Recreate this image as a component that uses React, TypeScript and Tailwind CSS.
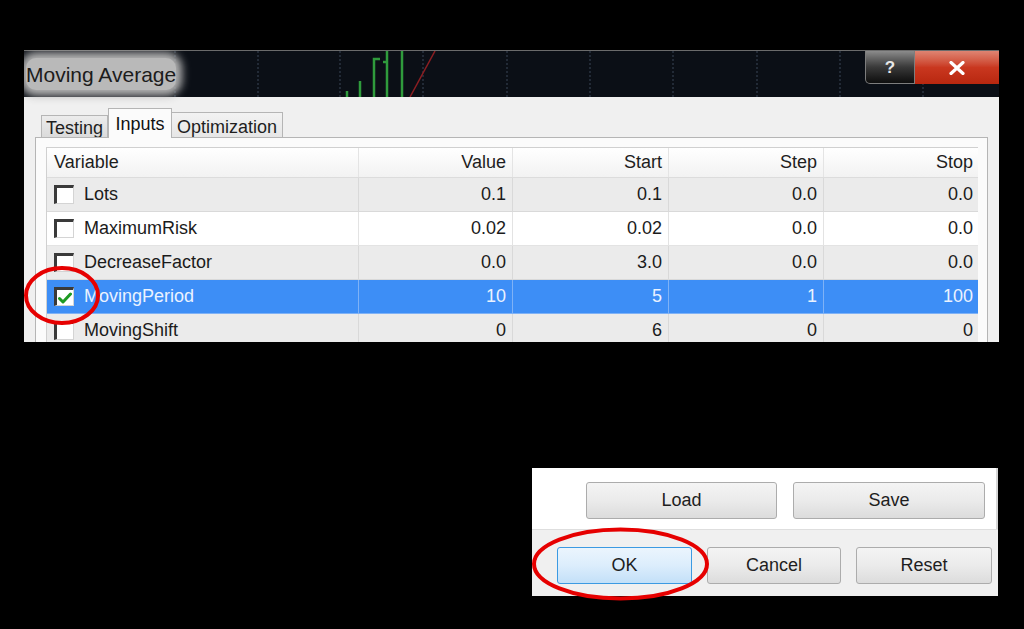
import React from 'react';

type Row = {
  name: string;
  value: string;
  start: string;
  step: string;
  stop: string;
  checked: boolean;
  rowClass: string;
  lineClass: string;
};

const rows: Row[] = [
  { name: 'Lots', value: '0.1', start: '0.1', step: '0.0', stop: '0.0', checked: false, rowClass: 'bg-[#ebebeb] text-[#1b1b1b]', lineClass: 'border-[#d9d9d9]' },
  { name: 'MaximumRisk', value: '0.02', start: '0.02', step: '0.0', stop: '0.0', checked: false, rowClass: 'bg-white text-[#1b1b1b]', lineClass: 'border-[#e3e3e3]' },
  { name: 'DecreaseFactor', value: '0.0', start: '3.0', step: '0.0', stop: '0.0', checked: false, rowClass: 'bg-[#ebebeb] text-[#1b1b1b]', lineClass: 'border-[#d9d9d9]' },
  { name: 'MovingPeriod', value: '10', start: '5', step: '1', stop: '100', checked: true, rowClass: 'bg-[#3d8ef6] text-[#eaf2ff]', lineClass: 'border-[#7fb2f6]' },
  { name: 'MovingShift', value: '0', start: '6', step: '0', stop: '0', checked: false, rowClass: 'bg-[#ebebeb] text-[#1b1b1b]', lineClass: 'border-[#d9d9d9]' },
];

const cols = 'grid grid-cols-[311px_154px_156px_155px_156px]';

function Checkbox({ checked }: { checked: boolean }) {
  return (
    <div className="w-[20px] h-[19px] shrink-0 bg-white border-t-[3px] border-l-[3px] border-r border-b border-t-[#3a3a3a] border-l-[#3a3a3a] border-r-[#d4d4d4] border-b-[#d4d4d4] flex items-center justify-center">
      {checked && (
        <svg width="14" height="12" viewBox="0 0 14 12">
          <path d="M1.5 6.5 L5 10 L12.5 2" fill="none" stroke="#1d9a22" strokeWidth="3" strokeLinecap="round" strokeLinejoin="round" />
        </svg>
      )}
    </div>
  );
}

function TitleChart() {
  const grid = [151, 234, 316, 399, 483, 566, 649, 733, 816, 899];
  return (
    <svg className="absolute inset-0" width="975" height="46" viewBox="0 0 975 46">
      {grid.map((x) => (
        <line key={x} x1={x} y1="0" x2={x} y2="46" stroke="#2b3442" strokeWidth="1.5" strokeDasharray="2 2" />
      ))}
      <g stroke="#2f9b3c" strokeWidth="2.5" fill="none">
        <line x1="323" y1="40" x2="323" y2="46" />
        <line x1="336" y1="30" x2="336" y2="46" />
        <path d="M350 46 L350 8 L356 8" />
        <line x1="363" y1="0" x2="363" y2="46" />
        <line x1="359" y1="11" x2="363" y2="11" />
        <line x1="378" y1="0" x2="378" y2="46" />
      </g>
      <line x1="386" y1="46" x2="411" y2="0" stroke="#8b1e22" strokeWidth="1.5" />
    </svg>
  );
}

function WinButton({ label, primary }: { label: string; primary?: boolean }) {
  return (
    <button
      className={
        primary
          ? 'h-[37px] w-full rounded-[3px] border border-[#3c9ae2] bg-linear-to-b from-[#ebf5fd] via-[#dcedfc] to-[#c3e0f8] text-[18px] text-[#1e1e1e]'
          : 'h-[37px] w-full rounded-[3px] border border-[#acacac] bg-linear-to-b from-[#f4f4f4] via-[#ebebeb] to-[#dcdcdc] text-[18px] text-[#1e1e1e]'
      }
    >
      {label}
    </button>
  );
}

export default function App() {
  return (
    <div className="relative w-[1024px] h-[629px] overflow-hidden bg-black pt-[50px] pl-[24px] font-['Liberation_Sans',Arial,sans-serif]">
      {/* dialog fragment */}
      <div className="w-[975px] h-[292px] flex flex-col overflow-hidden">
        {/* title bar */}
        <div className="relative h-[47px] shrink-0 bg-[#0b0f16] border-t border-[#6b6b6b] flex items-start justify-between">
          <TitleChart />
          <div className="relative mt-[7px] ml-[2px] h-[32px] flex items-center rounded-[10px] bg-[#b9b9b9] shadow-[0_0_9px_6px_#b4b4b4]">
            <span className="text-[21px] text-[#1c1c1c] leading-none">Moving Average</span>
          </div>
          <div className="relative flex">
            <div className="w-[50px] h-[33px] rounded-bl-[5px] border border-t-0 border-[#7d7d7d] bg-linear-to-b from-[#8c8c8c] via-[#3a3a3a] to-[#0e0e0e] flex items-center justify-center">
              <span className="text-[17px] font-bold text-[#e8e8e8] leading-none">?</span>
            </div>
            <div className="w-[84px] h-[33px] bg-linear-to-b from-[#de8472] via-[#c9371f] to-[#b8270f] flex items-center justify-center">
              <svg width="16" height="14" viewBox="0 0 16 14">
                <path d="M2 1.5 L14 12.5 M14 1.5 L2 12.5" stroke="#ffffff" strokeWidth="3.2" strokeLinecap="round" />
              </svg>
            </div>
          </div>
        </div>

        {/* client area */}
        <div className="flex-1 flex flex-col bg-[#f0f0f0] pt-[11px] pl-[11px] pr-[11px]">
          <div className="flex items-end h-[30px] pl-[6px] shrink-0">
            <div className="w-[67px] h-[23px] border border-b-0 border-[#b5b5b5] bg-linear-to-b from-[#ececec] to-[#dadada] flex justify-center pt-[3px] text-[18px] leading-[18px] text-[#1e1e1e]">
              Testing
            </div>
            <div className="relative z-10 w-[64px] h-[30px] border border-b-0 border-[#b5b5b5] bg-[#fbfbfb] flex justify-center pt-[6px] text-[18px] leading-[18px] text-[#111]">
              Inputs
            </div>
            <div className="w-[111px] h-[26px] border border-b-0 border-l-0 border-[#b5b5b5] bg-linear-to-b from-[#f2f2f2] to-[#e6e6e6] flex justify-center pt-[5px] text-[18px] leading-[18px] text-[#1e1e1e]">
              Optimization
            </div>
          </div>

          <div className="flex-1 -mt-px border border-[#b5b5b5] bg-[#fbfbfb] pt-[9px] pl-[10px] pr-[9px]">
            <div className="border-l border-t border-[#d0d0d0] text-[18px]">
              <div className={`${cols} h-[30px] bg-linear-to-b from-white to-[#f2f2f2] border-b border-[#dcdcdc] text-[#1e1e1e]`}>
                <div className="flex items-center pl-[7px]">Variable</div>
                <div className="flex items-center justify-end pr-[6px] border-l border-[#e4e4e4]">Value</div>
                <div className="flex items-center justify-end pr-[6px] border-l border-[#e4e4e4]">Start</div>
                <div className="flex items-center justify-end pr-[6px] border-l border-[#e4e4e4]">Step</div>
                <div className="flex items-center justify-end pr-[6px] border-l border-[#e4e4e4]">Stop</div>
              </div>
              {rows.map((r) => (
                <div key={r.name} className={`${cols} h-[34px] border-b ${r.rowClass} ${r.lineClass}`}>
                  <div className="flex items-center pl-[7px] gap-[10px]">
                    <Checkbox checked={r.checked} />
                    <span>{r.name}</span>
                  </div>
                  <div className={`flex items-center justify-end pr-[6px] border-l ${r.lineClass}`}>{r.value}</div>
                  <div className={`flex items-center justify-end pr-[6px] border-l ${r.lineClass}`}>{r.start}</div>
                  <div className={`flex items-center justify-end pr-[6px] border-l ${r.lineClass}`}>{r.step}</div>
                  <div className={`flex items-center justify-end pr-[6px] border-l ${r.lineClass}`}>{r.stop}</div>
                </div>
              ))}
            </div>
          </div>
        </div>
      </div>

      {/* buttons fragment */}
      <div className="ml-[508px] mt-[126px] w-[466px] h-[128px] flex flex-col">
        <div className="h-[61px] bg-white border-r-[2px] border-[#d6d6d6] flex justify-end gap-[16px] pt-[14px] pr-[11px]">
          <div className="w-[191px]"><WinButton label="Load" /></div>
          <div className="w-[192px]"><WinButton label="Save" /></div>
        </div>
        <div className="flex-1 bg-[#f0f0f0] border-t border-[#dedede] flex pt-[17px] pl-[25px] gap-[15px]">
          <div className="w-[135px]"><WinButton label="OK" primary /></div>
          <div className="w-[134px]"><WinButton label="Cancel" /></div>
          <div className="w-[136px]"><WinButton label="Reset" /></div>
        </div>
      </div>

      {/* red highlight marks */}
      <svg className="pointer-events-none absolute inset-0" width="1024" height="629" viewBox="0 0 1024 629">
        <ellipse cx="62" cy="295.5" rx="36" ry="27.5" fill="none" stroke="#e60000" strokeWidth="4" />
        <ellipse cx="620.5" cy="564" rx="86.5" ry="34.5" fill="none" stroke="#e60000" strokeWidth="4" />
      </svg>
    </div>
  );
}
